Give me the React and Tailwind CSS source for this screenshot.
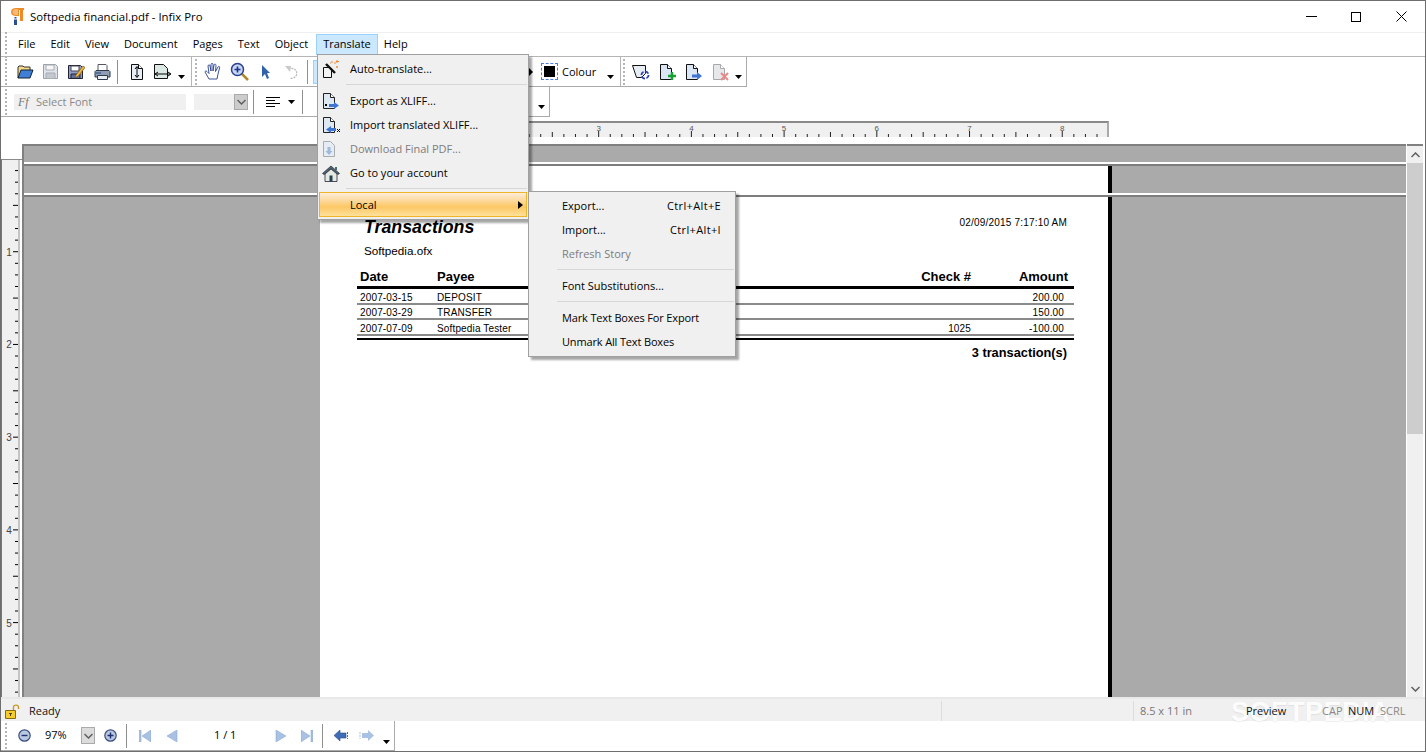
import React from "react";

const ui = { fontFamily: '"Open Sans", "Noto Sans", sans-serif' };
const doc = { fontFamily: '"Liberation Sans", Arial, sans-serif' };

const Arrow = ({ className = "" }) => (
  <svg width="7" height="4" viewBox="0 0 7 4" className={className}><path d="M0 0h7L3.500 4z" fill="#000" /></svg>
);
const Sep = ({ className = "" }) => <div className={`w-px h-[24px] bg-[#8f8f8f] ${className}`} />;
const Grip = ({ className = "" }) => (
  <div className={`w-[2px] h-[26px] border-l-2 border-dotted border-[#b5b5b5] ${className}`} />
);

const Logo = () => (
  <svg width="13" height="17" viewBox="0 0 13 17">
    <path d="M5 0h8v2h-1v11H9V2H8v6H5C2 8 0 6.500 0 4S2 0 5 0z" fill="#f08a24" />
    <path d="M5 1h2v6H5C3 7 1.500 6 1.500 4S3 1 5 1z" fill="#f9b878" />
    <path d="M3.500 9h2v1.500h-2zM3 11.500h3V17H3z" fill="#2b4f8f" />
  </svg>
);
const Folder = () => (
  <svg width="17" height="15" viewBox="0 0 17 15"><path d="M1 14V3l1-1h4l1 1h6v3" fill="#f5d98a" stroke="#333" /><path d="M1 14l3-8h12l-3 8z" fill="#3f7fd6" stroke="#123" /></svg>
);
const Save = () => (
  <svg width="15" height="15" viewBox="0 0 15 15"><path d="M.5.500h12l2 2v12H.5z" fill="#dfe3ea" stroke="#9a9ea6" /><path d="M3 1h8v5H3z" fill="#f7f7f7" stroke="#a8acb3" /><path d="M3 9h9v5.500H3z" fill="#c3c7ce" stroke="#a8acb3" /></svg>
);
const SaveAs = () => (
  <svg width="17" height="16" viewBox="0 0 17 16"><path d="M.5 1.500h12l2 2v11H.5z" fill="#8fa0c8" stroke="#223" /><path d="M3 2h8v5H3z" fill="#fff" stroke="#445" /><path d="M3 10h9v4.500H3z" fill="#5b6f9c" stroke="#223" /><path d="M8 11l7-9 2 1.500-7 9-3 1z" fill="#f3b43a" stroke="#7a5a10" strokeWidth=".7" /></svg>
);
const Printer = () => (
  <svg width="17" height="16" viewBox="0 0 17 16"><path d="M4 7V.500h8l1 1V7" fill="#fff" stroke="#556" /><path d="M1 13V7.500l1-1h13l1 1V13z" fill="#8f9db3" stroke="#2f3a4f" /><path d="M3.500 11.500h10v4h-10z" fill="#e9edf3" stroke="#2f3a4f" /><path d="M2 9h5" stroke="#1f3f7f" /></svg>
);
const Doc = ({ children, w = 14, h = 18 }) => (
  <svg width={w} height={h} viewBox="0 0 14 18"><path d="M1.500 1.500h7l4 4v11h-11z" fill="#e7eef7" stroke="#111" /><path d="M8.500 1.500v4h4" fill="#fff" stroke="#111" />{children}</svg>
);
const FitH = () => <Doc><path d="M7 4v10M5 6l2-2.500L9 6M5 12l2 2.500L9 12" fill="none" stroke="#000" /></Doc>;
const FitW = () => (
  <svg width="19" height="15" viewBox="0 0 19 15"><path d="M1.500.500h9l4 4v10h-13z" fill="#dbe8e4" stroke="#111" /><path d="M3 10h14M5 8l-3 2 3 2M15 8l3 2-3 2" fill="none" stroke="#000" /></svg>
);
const Hand = () => (
  <svg width="18" height="17" viewBox="0 0 18 17"><path d="M5 16L1 9c0-1 1-1.500 2-.5l2 2L4 3c0-1.500 2-1.500 2 0l1 5V1.500c0-1.500 2-1.500 2 0V8l1-6c.3-1.500 2-1 2 .5L11.500 8.500 14 4c.8-1 2-.5 1.600.8L14 11l-1 5z" fill="#fff" stroke="#27408b" strokeWidth=".9" /></svg>
);
const Zoomer = () => (
  <svg width="19" height="19" viewBox="0 0 19 19"><path d="M11 11l7 7" stroke="#b08a2a" strokeWidth="2.500" /><circle cx="7.500" cy="7.500" r="6" fill="#c9d8f2" stroke="#2a3f8f" strokeWidth="1.500" /><path d="M4.500 7.500h6M7.500 4.500v6" stroke="#1a2f8f" strokeWidth="1.600" /></svg>
);
const Cursor = () => (
  <svg width="9" height="14" viewBox="0 0 9 14"><path d="M1 0l8 8H6l2 5-2 1-2-5-3 3z" fill="#2f62a8" /></svg>
);
const Undo = () => (
  <svg width="14" height="14" viewBox="0 0 14 14"><path d="M3.500 4.500A5 5 0 1 1 5 13" fill="none" stroke="#bcbcbc" strokeWidth="1.300" strokeDasharray="2 1" /><path d="M0 1l6 0-1 6z" fill="#c9c9c9" /></svg>
);
const Align = () => (
  <svg width="14" height="10" viewBox="0 0 14 10"><path d="M0 .500h14M0 3.500h9M0 6.500h14M0 9.500h9" stroke="#000" /></svg>
);
const Wand = () => (
  <svg width="18" height="18" viewBox="0 0 18 18"><path d="M1.500 7.500h6l2 2v8h-8z" fill="#f4f4f4" stroke="#111" /><path d="M4 4l9 9" stroke="#111" strokeWidth="2.400" /><path d="M10 1v2M12 3h2M15 0v3M14 1.500h3M15 6v2M14 7h2M8 3h1" stroke="#f08c3a" /></svg>
);
const XExport = () => (
  <svg width="17" height="18" viewBox="0 0 17 18"><path d="M1.500 1.500h7l4 4v11h-11z" fill="#dde8f2" stroke="#222" /><path d="M8.500 1.500v4h4" fill="#fff" stroke="#222" /><path d="M3 12l2 2M5 12l-2 2" stroke="#000" /><path d="M7 12h5v-2l5 3.500-5 3.500v-2H7z" fill="#3f74d0" /></svg>
);
const XImport = () => (
  <svg width="19" height="18" viewBox="0 0 19 18"><path d="M1.500 1.500h7l4 4v11h-11z" fill="#dde8f2" stroke="#222" /><path d="M8.500 1.500v4h4" fill="#fff" stroke="#222" /><path d="M4 13.500L9 10v2h5v3H9v2z" fill="#3f74d0" /><path d="M15 13l3 3M18 13l-3 3" stroke="#000" /></svg>
);
const DocDown = () => (
  <svg width="14" height="18" viewBox="0 0 14 18"><path d="M1.500 1.500h7l4 4v11h-11z" fill="#e6ecf3" stroke="#a9acb0" /><path d="M5.500 7h3v4h2L7 15l-3.500-4h2z" fill="#9fb9dc" /></svg>
);
const Home = () => (
  <svg width="18" height="17" viewBox="0 0 18 17"><path d="M9 1L.5 8.500 2 9.500l7-6 7 6 1.500-1z" fill="#4c6a72" stroke="#223" strokeWidth=".7" /><path d="M3 9l6-5 6 5v7.500H3z" fill="#e4e9e6" stroke="#223" strokeWidth=".8" /><path d="M7.500 10.500h3v6h-3z" fill="#27424c" /><path d="M13 2h2v3h-2z" fill="#4c6a72" /></svg>
);
const NewDoc = ({ children, muted }) => (
  <svg width="17" height="18" viewBox="0 0 17 18"><path d="M1.500 1.500h7l4 4v11h-11z" fill={muted ? "#e6e8ec" : "#dbe6f4"} stroke={muted ? "#a9a9a9" : "#111"} /><path d="M8.500 1.500v4h4" fill="#fff" stroke={muted ? "#a9a9a9" : "#111"} />{children}</svg>
);
const Refresh = () => (
  <svg width="18" height="16" viewBox="0 0 18 16"><path d="M.5 1.500h13v8l-4 4h-5z" fill="#e8edf4" stroke="#111" /><circle cx="13" cy="11" r="3.600" fill="none" stroke="#2a3fb0" strokeWidth="1.800" strokeDasharray="4 1.500" /></svg>
);
const Lock = () => (
  <svg width="15" height="15" viewBox="0 0 15 15"><path d="M8.500 6V3c0-2.500 5-2.500 5 0v2" fill="none" stroke="#c99a2a" strokeWidth="1.400" /><path d="M.5 6.500h10v8H.5z" fill="#f5cc2a" stroke="#8a6a10" /><path d="M5.500 9v3M4 9.500h3" stroke="#4a3a08" /></svg>
);
const Circle = ({ plus }) => (
  <svg width="13" height="13" viewBox="0 0 13 13"><circle cx="6.500" cy="6.500" r="5.700" fill="#b9c8e2" stroke="#3c4f80" strokeWidth="1.200" /><path d={plus ? "M3.500 6.500h6M6.500 3.500v6" : "M3.500 6.500h6"} stroke="#1f2f6f" strokeWidth="1.400" /></svg>
);
const Nav = ({ d, w = 12 }) => (
  <svg width={w} height="12" viewBox="0 0 12 12"><path d={d} fill="#a9c1e2" stroke="#8fabd3" strokeWidth=".6" /></svg>
);
const Chevron = ({ className = "" }) => (
  <svg width="9" height="6" viewBox="0 0 9 6" className={className}><path d="M.5 5L4.500 1l4 4" fill="none" stroke="#606060" strokeWidth="1.500" /></svg>
);

function HRuler() {
  const ticks = [];
  for (let i = 0; i < 68; i++) {
    const x = 0.5 + i * 11.59;
    const cls = i % 8 === 0 ? 6 : i % 4 === 0 ? 5 : 3;
    ticks.push(<path key={i} d={`M${x} ${14 - cls}v${cls}`} stroke="#222" />);
  }
  const nums = [1, 2, 3, 4, 5, 6, 7, 8];
  return (
    <svg width="786" height="14" viewBox="0 0 786 14">
      {ticks}
      {nums.map((n) => (
        <text key={n} x={n * 92.72 + 0.5} y="8" textAnchor="middle" fontSize="8" fill="#555" style={doc}>{n}</text>
      ))}
    </svg>
  );
}

function VRuler() {
  const ticks = [];
  for (let i = 1; i < 48; i++) {
    const y = i * 11.59 - 1.5;
    const len = i % 4 === 0 ? 5 : 3;
    ticks.push(<path key={i} d={`M${16 - len} ${y + 0.5}h${len}`} stroke="#000" />);
  }
  return (
    <svg width="16" height="537" viewBox="0 0 16 537">
      {ticks}
      {[1, 2, 3, 4, 5].map((n) => (
        <text key={n} x="7" y={n * 92.72 + 3} textAnchor="middle" fontSize="10" fill="#444" style={doc}>{n}</text>
      ))}
    </svg>
  );
}

const Band = ({ className, children }) => (
  <div className={`flex ${className}`}>
    <div className="w-[296px] bg-[#aaaaaa]" />
    <div className="w-[788px] bg-white border-r-4 border-black box-content">{children}</div>
    <div className="flex-1 bg-[#aaaaaa]" />
  </div>
);

const Row = ({ date, payee, check, amount }) => (
  <div className="flex items-end h-[15.500px] text-[10px] leading-[10px] tracking-[0.15px] text-black ml-[37px] w-[717px] border-b-2 border-[#8a8a8a]">
    <div className="w-[77px] pl-[3px] shrink-0">{date}</div>
    <div className="w-[200px] pl-[3px] shrink-0">{payee}</div>
    <div className="w-[337px] text-right shrink-0">{check}</div>
    <div className="flex-1 text-right pr-[10px]">{amount}</div>
  </div>
);

const MenuItem = ({ icon, label, disabled, shortcut, left = "w-[32px] pl-[4px]", tight }) => (
  <div className={`flex items-center h-[24px] ${disabled ? "text-[#7d7d7d]" : "text-black"}`}>
    <div className={`${left} flex justify-start shrink-0`}>{icon}</div>
    <span className={tight ? "tracking-[-0.15px]" : ""}>{label}</span>
    {shortcut && <span className="ml-auto pr-[14px] tracking-[0.35px]">{shortcut}</span>}
  </div>
);

export default function App() {
  return (
    <div className="relative w-[1426px] h-[752px] overflow-hidden bg-white flex flex-col border border-[#6e6e6e] text-[11px] text-black" style={ui}>
      {/* title */}
      <div className="flex items-center h-[31px] shrink-0 pl-[10px]">
        <Logo />
        <span className="ml-[6px] text-[11.400px]">Softpedia financial.pdf - Infix Pro</span>
        <div className="ml-auto flex items-center pr-[18px]">
          <div className="w-[11px] h-px bg-black" />
          <div className="w-[10px] h-[10px] border border-black ml-[34px]" />
          <svg width="11" height="11" viewBox="0 0 11 11" className="ml-[35px]"><path d="M.5.500l10 10M10.500.500l-10 10" stroke="#000" /></svg>
        </div>
      </div>
      {/* menu bar */}
      <div className="flex items-center h-[25px] shrink-0 pl-[4px] border-t border-[#f0f0f0] border-b border-b-[#b5b5b5]">
        <Grip className="h-[22px]" />
        <div className="flex ml-[11px] gap-[15px] items-center">
          <span>File</span><span>Edit</span><span>View</span><span>Document</span><span>Pages</span><span>Text</span><span>Object</span>
          <span className="px-[6px] -mx-[7px] h-[21px] flex items-center bg-[#cce8ff] border border-[#99d1ff]">Translate</span>
          <span className="ml-[-2px]">Help</span>
        </div>
      </div>
      {/* toolbar 1 */}
      <div className="flex items-center h-[30px] w-[746px] shrink-0 border-b border-r border-[#aaaaaa] pl-[4px]">
        <Grip />
        <span className="w-[10px]" /><Folder /><span className="w-[9px]" /><Save /><span className="w-[10px]" /><SaveAs /><span className="w-[9px]" /><Printer />
        <Sep className="ml-[6px]" />
        <span className="w-[12px]" /><FitH /><span className="w-[9px]" /><FitW />
        <Arrow className="ml-[6px] mt-[10px]" />
        <div className="w-px h-[29px] bg-[#b5b5b5] ml-[6px]" />
        <Grip className="ml-[3px]" />
        <span className="w-[7px]" /><Hand /><span className="w-[8px]" /><Zoomer /><span className="w-[12px]" /><Cursor /><span className="w-[15px]" /><Undo />
        <Sep className="ml-[8px]" />
        <div className="ml-[5px] w-[30px] h-[24px] bg-[#cce8ff] border border-[#99d1ff]" />
        <div className="w-[186px]" />
        <span className="w-0 h-0 border-y-[4px] border-y-transparent border-l-[4px] border-l-black" />
        <div className="ml-[8px] w-[17px] h-[17px] border border-dashed border-[#4c7fe0] flex items-center justify-center"><div className="w-[11px] h-[11px] bg-black" /></div>
        <span className="ml-[4px] pt-[2px]">Colour</span>
        <Arrow className="ml-[11px] mt-[10px]" />
        <div className="w-px h-[29px] bg-[#b5b5b5] ml-[6px]" />
        <Grip className="ml-[2px]" />
        <span className="w-[7px]" /><Refresh /><span className="w-[9px]" />
        <NewDoc><path d="M9 13h8M13 9v8" stroke="#18a030" strokeWidth="2.500" /></NewDoc>
        <span className="w-[9px]" />
        <NewDoc><path d="M7 11.500h5V9l5 4-5 4v-2.500H7z" fill="#3f74d0" /></NewDoc>
        <span className="w-[10px]" />
        <NewDoc muted><path d="M9 10l7 7M16 10l-7 7" stroke="#e88" strokeWidth="2" /></NewDoc>
        <Arrow className="ml-[6px] mt-[10px]" />
      </div>
      {/* toolbar 2 */}
      <div className="flex items-center h-[30px] w-[549px] shrink-0 border-b border-r border-[#aaaaaa] pl-[4px] pt-[1px]">
        <Grip />
        <div className="ml-[7px] w-[172px] h-[16px] bg-[#f0f0f0] flex items-center pl-[4px] text-[#888888]">
          <span className="italic text-[#777] text-[12px] w-[18px]" style={{ fontFamily: '"Liberation Serif", serif' }}>Ff</span>
          <span className="text-[11px] pt-[1px]">Select Font</span>
        </div>
        <div className="ml-[8px] w-[54px] h-[16px] bg-[#f0f0f0] flex justify-end">
          <div className="w-[14px] h-[16px] bg-[#cccccc] border border-[#aaaaaa] flex items-center justify-center"><Chevron className="rotate-180" /></div>
        </div>
        <Sep className="ml-[5px]" />
        <span className="w-[12px]" /><Align />
        <Arrow className="ml-[8px]" />
        <Sep className="ml-[7px]" />
        <div className="ml-[14px] w-px h-[12px] bg-[#aaa]" />
        <div className="ml-auto mr-[4px] mt-[10px]"><Arrow /></div>
      </div>
      {/* ruler band */}
      <div className="h-[27px] shrink-0 flex items-start pt-[4px] pl-[319px]">
        <div className="w-[789px] h-[16px] bg-[#f0f0f0] border-t-2 border-[#8a8a8a] border-r-2 border-r-[#aaaaaa]">
          <HRuler />
        </div>
      </div>
      {/* document */}
      <div className="flex-1 flex min-h-0">
        <div className="w-[21px] shrink-0 flex flex-col">
          <div className="h-[15px] shrink-0" />
          <div className="flex-1 flex border-t border-[#8a8a8a] border-l border-l-[#777]">
            <div className="w-[16px] bg-[#f0f0f0] overflow-hidden"><VRuler /></div>
            <div className="w-[2px] bg-[#c4c4c4]" />
            <div className="w-[2px] bg-white" />
          </div>
        </div>
        <div className="w-[1384px] shrink-0 flex flex-col border-t-2 border-l-2 border-[#808080]" style={doc}>
          <div className="h-[16px] bg-[#aaaaaa] shrink-0" />
          <div className="h-[2px] bg-white shrink-0" />
          <div className="h-[2px] bg-[#7d7d7d] shrink-0" />
          <Band className="h-[27px] shrink-0" />
          <div className="h-[2px] bg-white shrink-0" />
          <div className="h-[2px] bg-[#7d7d7d] shrink-0" />
          <Band className="flex-1 min-h-0">
            <div className="flex justify-between pl-[44px] pr-[41px] pt-[20px]">
              <div className="text-[17.800px] leading-[20px] font-bold italic">Transactions</div>
              <div className="text-[10px] tracking-[0.2px] -mt-[2px]">02/09/2015 7:17:10 AM</div>
            </div>
            <div className="pl-[44px] pt-[6px] text-[11.700px] leading-[15px]">Softpedia.ofx</div>
            <div className="flex items-center ml-[37px] w-[717px] mt-[10px] h-[21px] text-[13px] font-bold border-b-[3px] border-black">
              <div className="w-[77px] pl-[3px] shrink-0">Date</div>
              <div className="w-[200px] pl-[3px] shrink-0">Payee</div>
              <div className="w-[337px] text-right shrink-0">Check #</div>
              <div className="flex-1 text-right pr-[6px]">Amount</div>
            </div>
            <div>
              <Row date="2007-03-15" payee="DEPOSIT" amount="200.00" />
              <Row date="2007-03-29" payee="TRANSFER" amount="150.00" />
              <Row date="2007-07-09" payee="Softpedia Tester" check="1025" amount="-100.00" />
            </div>
            <div className="ml-[37px] w-[717px] mt-[2px] h-[2px] bg-black" />
            <div className="ml-[37px] w-[710px] mt-[3px] text-right text-[12.800px] font-bold">3 transaction(s)</div>
          </Band>
        </div>
        <div className="ml-px w-[16px] shrink-0 flex flex-col bg-[#f0f0f0] border-t-2 border-[#808080]">
          <div className="h-[17px] flex items-center justify-center"><Chevron /></div>
          <div className="h-[271px] bg-[#cdcdcd]" />
          <div className="mt-auto h-[17px] flex items-center justify-center"><Chevron className="rotate-180" /></div>
        </div>
      </div>
      {/* watermark sits under the status texts */}
      <div className="absolute left-[1230px] top-[696px] text-[27px] leading-[30px] font-bold tracking-[0.5px] text-white opacity-80 z-10 [text-shadow:0_1px_1px_rgba(0,0,0,0.08)]" style={doc}>SOFTPEDIA</div>
      {/* status */}
      <div className="h-[24px] shrink-0 border-t-2 border-[#e8e8e8] bg-[#f0f0f0] flex items-center pl-[4px] pt-[2px]">
        <Lock />
        <span className="ml-[9px] text-[#111]">Ready</span>
        <div className="ml-auto flex items-center h-full relative z-20">
          <div className="w-px h-full bg-[#dcdcdc]" />
          <div className="w-[191px]" />
          <div className="w-px h-full bg-[#dcdcdc]" />
          <span className="ml-[6px] w-[106px] text-[#777] whitespace-nowrap">8.5 x 11 in</span>
          <span className="w-[76px] text-[#111]">Preview</span>
          <span className="w-[26px] text-[#888]">CAP</span>
          <span className="w-[32px] text-[#111]">NUM</span>
          <span className="w-[28px] text-[#888]">SCRL</span>
          <span className="w-[17px]" />
        </div>
      </div>
      {/* bottom toolbar */}
      <div className="h-[30px] w-[394px] shrink-0 flex items-center border-b border-r border-[#aaaaaa] pl-[4px]">
        <Grip />
        <span className="w-[11px]" /><Circle />
        <span className="ml-[14px] w-[36px]">97%</span>
        <div className="w-[14px] h-[17px] bg-[#dcdcdc] border border-[#aaaaaa] flex items-center justify-center"><Chevron className="rotate-180" /></div>
        <span className="w-[9px]" /><Circle plus />
        <Sep className="ml-[9px]" />
        <span className="w-[12px]" /><Nav d="M0 0h2v12H0zM12 0v12L3 6z" />
        <span className="w-[15px]" /><Nav d="M11 0v12L1 6z" />
        <span className="ml-[36px] w-[61px]">1 / 1</span>
        <Nav d="M1 0v12L11 6z" />
        <span className="w-[14px]" /><Nav d="M12 0h-2v12h2zM0 0v12L9 6z" />
        <Sep className="ml-[9px]" />
        <span className="w-[11px]" />
        <svg width="15" height="11" viewBox="0 0 15 11"><path d="M0 5.500L6 0v3h6v5H6v3z" fill="#3f6db5" stroke="#2a4f8f" strokeWidth=".6" /><path d="M13.500 2v7" stroke="#3f6db5" strokeDasharray="2 1" /></svg>
        <span className="w-[10px]" />
        <svg width="15" height="11" viewBox="0 0 15 11"><path d="M15 5.500L9 0v3H3v5h6v3z" fill="#a9c1e2" /><path d="M1 2v7" stroke="#a9c1e2" strokeDasharray="2 1" /></svg>
        <Arrow className="ml-[9px] mt-[12px]" />
      </div>

      {/* translate menu */}
      <div className="absolute left-[316px] top-[53px] w-[212px] h-[166px] bg-[#f0f0f0] border border-[#a0a0a0] shadow-[3px_3px_2px_rgba(0,0,0,0.35)] pt-[2px] z-20">
        <MenuItem icon={<Wand />} label="Auto-translate..." />
        <div className="ml-[28px] h-[2px] my-[3px] border-t border-[#d7d7d7] mr-px" />
        <MenuItem icon={<XExport />} label="Export as XLIFF..." />
        <MenuItem icon={<XImport />} label="Import translated XLIFF..." />
        <MenuItem icon={<DocDown />} label="Download Final PDF..." disabled />
        <MenuItem icon={<Home />} label="Go to your account" />
        <div className="ml-[28px] h-[2px] mt-[3px] mb-[2px] border-t border-[#d7d7d7] mr-px" />
        <div className="mx-px h-[25px] flex items-center pl-[30px] pt-px border border-[#f0b428] bg-gradient-to-b from-[#fdecd8] via-[#fdc864] via-60% to-[#fee09a]">
          <span>Local</span>
          <span className="ml-auto mr-[3px] w-0 h-0 border-y-[4px] border-y-transparent border-l-[5px] border-l-black" />
        </div>
      </div>
      {/* local submenu */}
      <div className="absolute left-[527px] top-[190px] w-[208px] h-[166px] bg-[#f0f0f0] border border-[#a0a0a0] shadow-[3px_3px_2px_rgba(0,0,0,0.35)] pt-[2px] z-30">
        <MenuItem left="w-[33px]" label="Export..." shortcut="Ctrl+Alt+E" />
        <MenuItem left="w-[33px]" label="Import..." shortcut="Ctrl+Alt+I" />
        <MenuItem left="w-[33px]" label="Refresh Story" disabled />
        <div className="ml-[28px] h-[2px] my-[3px] border-t border-[#d7d7d7] mr-px" />
        <MenuItem left="w-[33px]" label="Font Substitutions..." />
        <div className="ml-[28px] h-[2px] my-[3px] border-t border-[#d7d7d7] mr-px" />
        <MenuItem left="w-[33px]" label="Mark Text Boxes For Export" tight />
        <MenuItem left="w-[33px]" label="Unmark All Text Boxes" tight />
      </div>
    </div>
  );
}
